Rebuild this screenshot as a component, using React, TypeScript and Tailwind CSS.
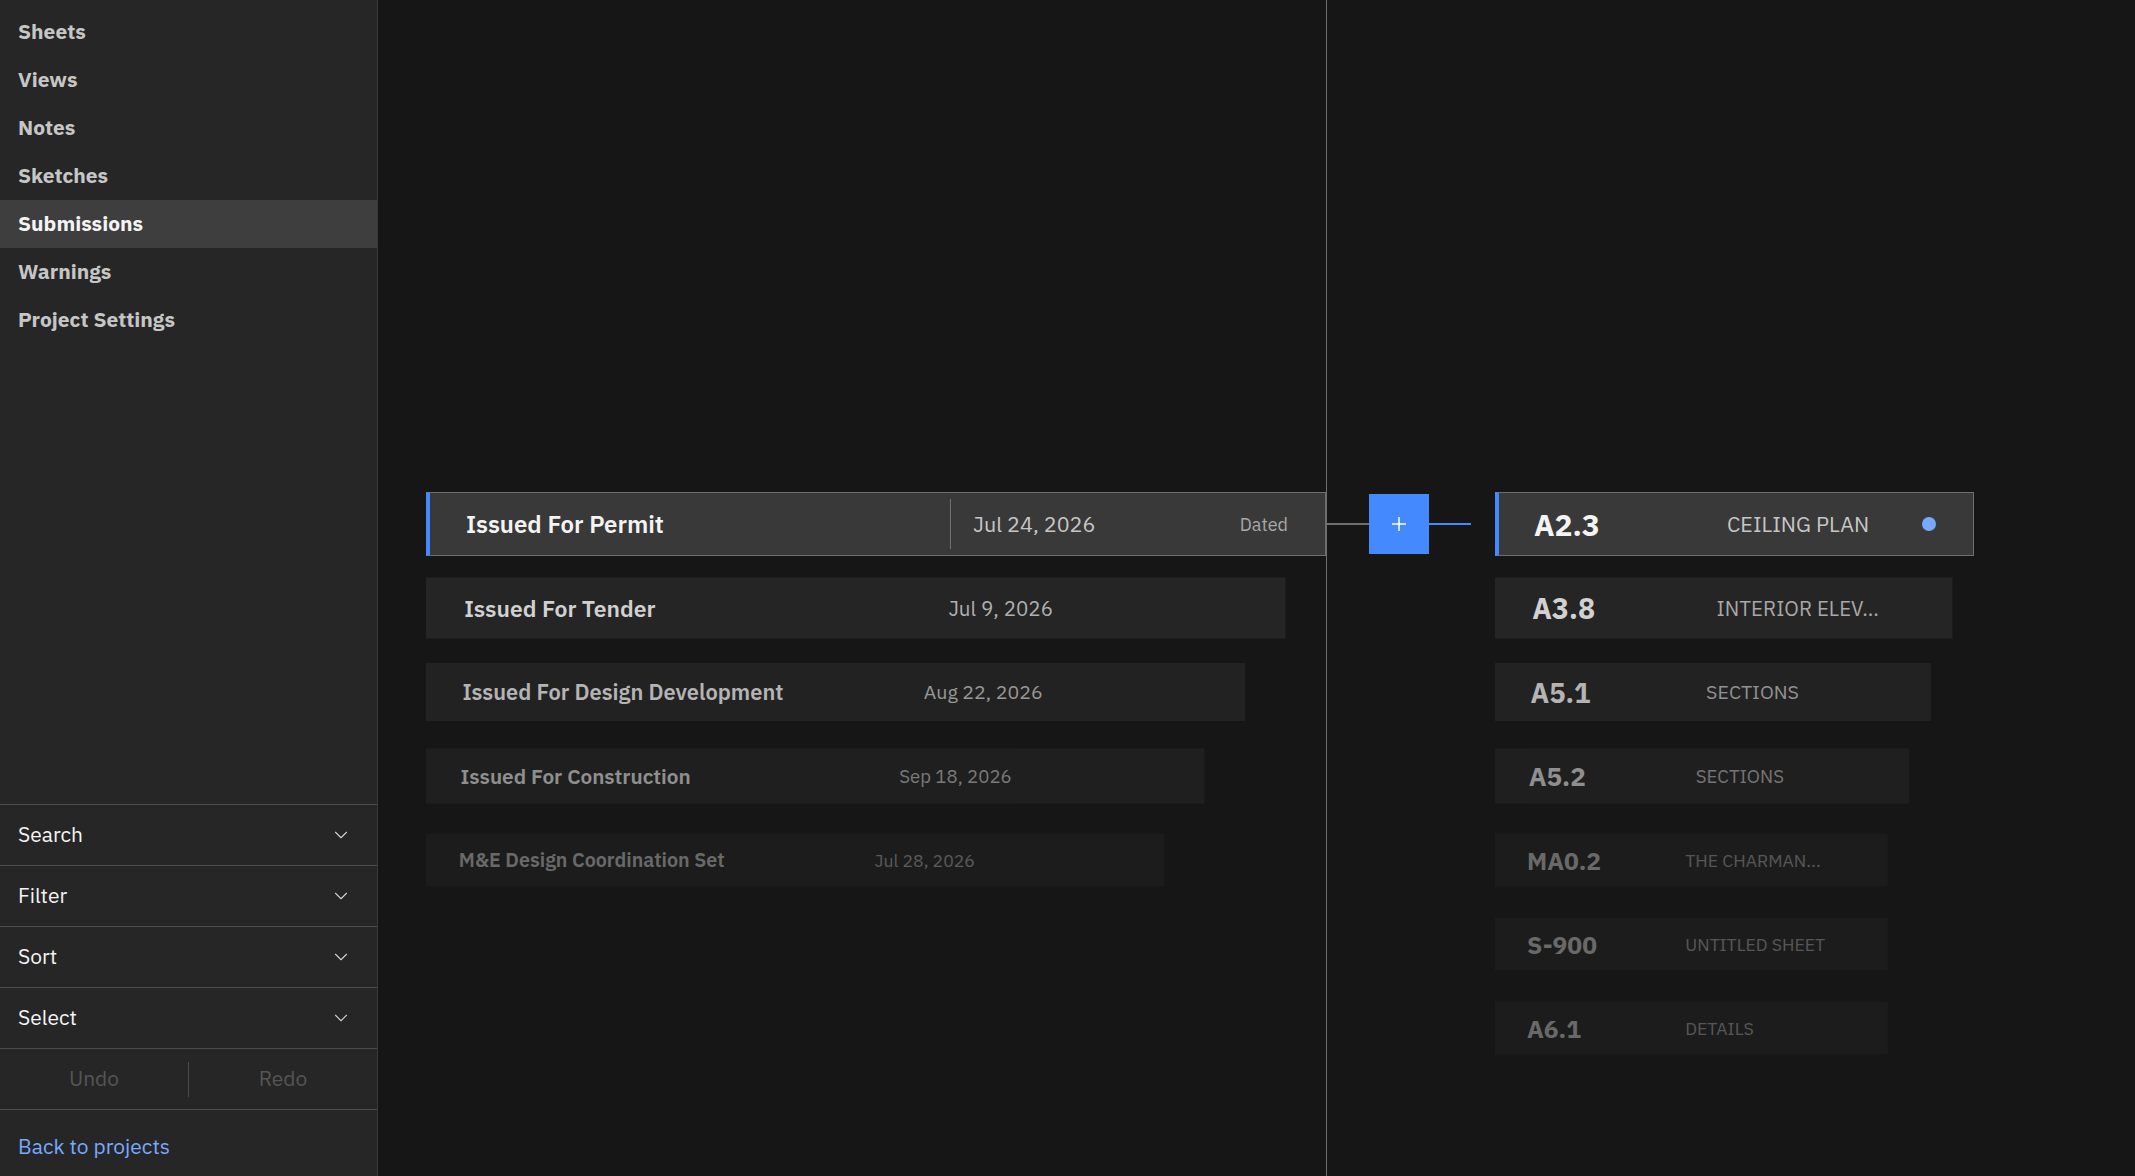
import { ChevronDown } from 'lucide-react';

type Submission = { name: string; date: string };
type Sheet = { number: string; title: string };

const NAV = ['Sheets', 'Views', 'Notes', 'Sketches', 'Submissions', 'Warnings', 'Project Settings'];
const TOOLS = ['Search', 'Filter', 'Sort', 'Select'];

const SUBMISSIONS: Submission[] = [
  { name: 'Issued For Permit', date: 'Jul 24, 2026' },
  { name: 'Issued For Tender', date: 'Jul 9, 2026' },
  { name: 'Issued For Design Development', date: 'Aug 22, 2026' },
  { name: 'Issued For Construction', date: 'Sep 18, 2026' },
  { name: 'M&E Design Coordination Set', date: 'Jul 28, 2026' },
];

const SHEETS: Sheet[] = [
  { number: 'A2.3', title: 'CEILING PLAN' },
  { number: 'A3.8', title: 'INTERIOR ELEV...' },
  { number: 'A5.1', title: 'SECTIONS' },
  { number: 'A5.2', title: 'SECTIONS' },
  { number: 'MA0.2', title: 'THE CHARMAN...' },
  { number: 'S-900', title: 'UNTITLED SHEET' },
  { number: 'A6.1', title: 'DETAILS' },
];

// cards recede by depth: shrink from the left edge and fade
const DEPTH = [
  'scale-100 opacity-100',
  'scale-[0.955] opacity-95',
  'scale-[0.91] opacity-80',
  'scale-[0.865] opacity-[0.61]',
  'scale-[0.82] opacity-[0.42]',
];

const depth = (i: number) => DEPTH[Math.min(i, DEPTH.length - 1)];

function Sidebar() {
  return (
    <aside className="w-[378px] shrink-0 h-full flex flex-col bg-[#262626] border-r border-[#393939]">
      <nav className="pt-2">
        {NAV.map(item => (
          <div
            key={item}
            className={`h-12 flex items-center pl-[18px] text-[21px] font-bold ${
              item === 'Submissions' ? 'bg-[#3e3e3e] text-[#f4f4f4]' : 'text-[#c6c6c6]'
            }`}
          >
            {item}
          </div>
        ))}
      </nav>
      <div className="flex-1" />
      {TOOLS.map(tool => (
        <div
          key={tool}
          className="h-[61px] flex items-center justify-between pl-[18px] pr-[25px] border-t border-[#4c4c4c] text-[21px] text-[#f4f4f4]"
        >
          <span>{tool}</span>
          <ChevronDown size={22} strokeWidth={1.2} className="text-[#d0d0d0]" />
        </div>
      ))}
      <div className="h-[61px] flex items-center border-t border-[#4c4c4c] text-[21px] text-[#555555]">
        <div className="flex-1 text-center">Undo</div>
        <div className="w-px h-[35px] bg-[#4c4c4c]" />
        <div className="flex-1 text-center">Redo</div>
      </div>
      <div className="h-[67px] flex items-center pl-[18px] pt-2 border-t border-[#4c4c4c] text-[21px] text-[#78a9ff]">
        Back to projects
      </div>
    </aside>
  );
}

function SubmissionCard({ item, index }: { item: Submission; index: number }) {
  const active = index === 0;
  return (
    <div className="h-[84px] flex items-center">
      <div
        className={`origin-left w-[900px] h-16 flex items-center ${depth(index)} ${
          active ? 'bg-[#393939] border border-[#6f6f6f] border-l-4 border-l-[#4589ff]' : 'bg-[#262626]'
        }`}
      >
        <div
          className={`shrink-0 text-[24px] font-semibold ${
            active ? 'w-[520px] pl-[36px] text-[#f4f4f4]' : 'w-[524px] pl-[40px] text-[#dcdcdc]'
          }`}
        >
          {item.name}
        </div>
        <div className={`w-px h-[50px] ${active ? 'bg-[#6f6f6f]' : 'bg-transparent'}`} />
        <div className={`pl-[22px] text-[21.5px] ${active ? 'text-[#c6c6c6]' : 'text-[#b8b8b8]'}`}>
          {item.date}
        </div>
        {active && <div className="ml-auto pr-[37px] text-[18px] text-[#a8a8a8]">Dated</div>}
      </div>
    </div>
  );
}

function SheetCard({ sheet, index }: { sheet: Sheet; index: number }) {
  const active = index === 0;
  return (
    <div className="h-[84px] flex items-center">
      <div className="w-[168px] shrink-0 flex items-center">
        {active && (
          <>
            <div className="w-[42px] h-[2px] bg-[#6f6f6f]" />
            <div className="w-[60px] h-[60px] bg-[#4589ff] flex items-center justify-center">
              <svg width="20" height="20" viewBox="0 0 20 20" fill="none" stroke="white" strokeWidth="1.5">
                <path d="M10 3v14M3 10h14" />
              </svg>
            </div>
            <div className="w-[42px] h-[2px] bg-[#4589ff]" />
          </>
        )}
      </div>
      <div
        className={`origin-left w-[479px] h-16 flex items-center ${depth(index)} ${
          active ? 'bg-[#393939] border border-[#6f6f6f] border-l-4 border-l-[#4589ff]' : 'bg-[#262626]'
        }`}
      >
        <div
          className={`shrink-0 text-[30px] font-bold ${
            active ? 'w-[228px] pl-[35px] text-[#f4f4f4]' : 'w-[232px] pl-[39px] text-[#dcdcdc]'
          }`}
        >
          {sheet.number}
        </div>
        <div className={`text-[21.5px] ${active ? 'text-[#c6c6c6]' : 'text-[#b0b0b0]'}`}>{sheet.title}</div>
        {active && <div className="ml-auto mr-[37px] w-[14px] h-[14px] rounded-full bg-[#78a9ff]" />}
      </div>
    </div>
  );
}

export default function App() {
  return (
    <div className="w-[2135px] h-[1176px] flex overflow-hidden bg-[#161616] font-['IBM_Plex_Sans','Noto_Sans',sans-serif]">
      <Sidebar />
      <main className="flex-1 flex h-full">
        <section className="w-[948px] shrink-0 pl-12 pt-[482px] flex flex-col">
          {SUBMISSIONS.map((s, i) => (
            <SubmissionCard key={s.name} item={s} index={i} />
          ))}
        </section>
        <section className="flex-1 border-l border-[#6f6f6f] pt-[482px] flex flex-col">
          {SHEETS.map((s, i) => (
            <SheetCard key={s.number} sheet={s} index={i} />
          ))}
        </section>
      </main>
    </div>
  );
}
